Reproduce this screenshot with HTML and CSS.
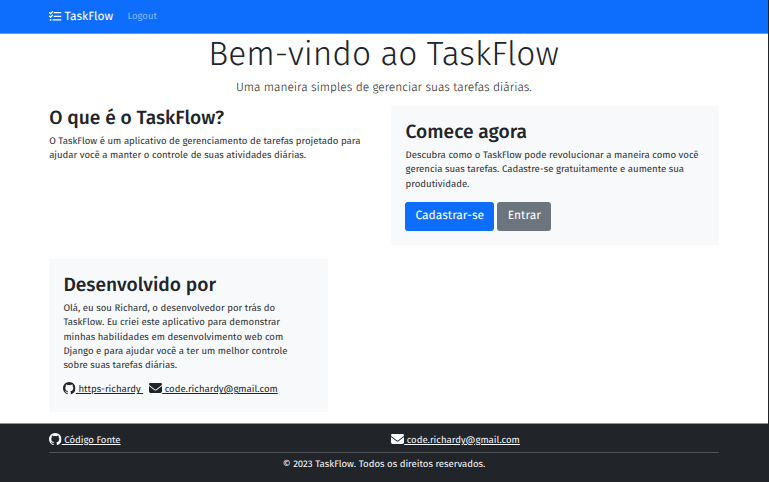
FILE: index.html
```html
<!DOCTYPE html>
<html lang="pt-br">
<head>
<meta charset="utf-8">
<title>TaskFlow</title>
<link rel="stylesheet" href="styles.css">
</head>
<body>
<svg class="sprite" aria-hidden="true">
  <symbol id="github" viewBox="0 0 16 16"><path d="M8 0C3.58 0 0 3.58 0 8c0 3.54 2.29 6.53 5.47 7.59.4.07.55-.17.55-.38 0-.19-.01-.82-.01-1.49-2.01.37-2.53-.49-2.69-.94-.09-.23-.48-.94-.82-1.13-.28-.15-.68-.52-.01-.53.63-.01 1.08.58 1.23.82.72 1.21 1.87.87 2.33.66.07-.52.28-.87.51-1.07-1.78-.2-3.64-.89-3.64-3.95 0-.87.31-1.59.82-2.15-.08-.2-.36-1.02.08-2.12 0 0 .67-.21 2.2.82.64-.18 1.32-.27 2-.27s1.36.09 2 .27c1.53-1.04 2.2-.82 2.2-.82.44 1.1.16 1.92.08 2.12.51.56.82 1.27.82 2.15 0 3.07-1.87 3.75-3.65 3.95.29.25.54.73.54 1.48 0 1.07-.01 1.93-.01 2.2 0 .21.15.46.55.38A8.01 8.01 0 0 0 16 8c0-4.42-3.58-8-8-8z"/></symbol>
  <symbol id="mail" viewBox="0 64 512 384" preserveAspectRatio="none"><path d="M48 64C21.500 64 0 85.500 0 112c0 15.100 7.100 29.300 19.200 38.400L236.800 313.600c11.400 8.500 27 8.500 38.400 0L492.800 150.400c12.100-9.100 19.200-23.300 19.200-38.400 0-26.500-21.500-48-48-48H48zM0 176v208c0 35.300 28.700 64 64 64h384c35.300 0 64-28.700 64-64V176L294.400 339.200c-22.800 17.100-54 17.100-76.800 0L0 176z"/></symbol>
  <symbol id="tasks" viewBox="0 0 12 10"><path d="M.5 1.600l1 1L3.400.5M.5 5l1 1L3.400 3.900M5 1.600h6.500M5 5h6.500M4 8.500h7.500" fill="none" stroke="currentColor" stroke-width="1.200" stroke-linecap="round" stroke-linejoin="round"/><circle cx="1.500" cy="8.500" r=".9"/></symbol>
</svg>
<nav class="navbar">
  <a class="brand"><svg class="tasks"><use href="#tasks"/></svg><span>TaskFlow</span></a>
  <a class="logout">Logout</a>
</nav>
<main>
  <header class="hero">
    <h1>Bem-vindo ao TaskFlow</h1>
    <p>Uma maneira simples de gerenciar suas tarefas diárias.</p>
  </header>
  <div class="row">
    <section class="about">
      <h2>O que é o TaskFlow?</h2>
      <p class="text">O TaskFlow é um aplicativo de gerenciamento de tarefas projetado para<br>ajudar você a manter o controle de suas atividades diárias.</p>
    </section>
    <section class="card start">
      <h2>Comece agora</h2>
      <p class="text">Descubra como o TaskFlow pode revolucionar a maneira como você<br>gerencia suas tarefas. Cadastre-se gratuitamente e aumente sua<br>produtividade.</p>
      <div class="buttons"><a class="btn primary">Cadastrar-se</a><a class="btn secondary">Entrar</a></div>
    </section>
  </div>
  <section class="card dev">
    <h2>Desenvolvido por</h2>
    <p class="text">Olá, eu sou Richard, o desenvolvedor por trás do<br>TaskFlow. Eu criei este aplicativo para demonstrar<br>minhas habilidades em desenvolvimento web com<br>Django e para ajudar você a ter um melhor controle<br>sobre suas tarefas diárias.</p>
    <div class="links">
      <a class="link"><svg><use href="#github"/></svg><span>&nbsp;https-richardy&nbsp;</span></a>
      <a class="link"><svg class="mail"><use href="#mail"/></svg><span>&nbsp;code.richardy@gmail.com</span></a>
    </div>
  </section>
</main>
<footer>
  <div class="foot-links">
    <a class="link"><svg><use href="#github"/></svg><span>&nbsp;Código Fonte</span></a>
    <a class="link"><svg class="mail"><use href="#mail"/></svg><span>&nbsp;code.richardy@gmail.com</span></a>
  </div>
  <p class="copy">© 2023 TaskFlow. Todos os direitos reservados.</p>
</footer>
</body>
</html>
```
FILE: styles.css
```css
* { box-sizing: border-box; }
body {
  margin: 0;
  width: 769px;
  height: 482px;
  overflow: hidden;
  display: flex;
  flex-direction: column;
  border-right: 1px solid #212529;
  background: #fff;
  color: #212529;
  font: 9.600px/14.270px "Fira Sans", "Noto Sans", sans-serif;
  text-rendering: geometricPrecision;
  white-space: nowrap;
}
h1, h2, p { margin: 0; }
.sprite { position: absolute; width: 0; height: 0; }
svg { fill: currentColor; flex: none; }
.navbar {
  height: 34px;
  padding: 0 49px 0 49.400px;
  display: flex;
  align-items: center;
  background: #0d6efd;
  border-bottom: 1px solid #5c9dfe;
  color: #fff;
}
.brand { display: flex; align-items: center; font-size: 12px; line-height: 15px; width: 78px; gap: 2.500px; }
.brand span { padding-top: 1px; }
.tasks { width: 12.500px; height: 10.500px; margin-top: -1px; }
.logout { color: #86b7fe; margin-top: -1px; }
main { flex: 1; padding: 0 49px 0 49.200px; }
.hero { height: 72px; text-align: center; }
.hero h1 { font-weight: 300; font-size: 33.500px; line-height: 40px; margin-left: -1px; }
.hero p { font-weight: 300; font-size: 12px; line-height: 18px; margin-top: 5px; margin-left: -.5px; }
.row { display: flex; justify-content: space-between; height: 153px; }
h2 { font-weight: 500; font-size: 19.200px; line-height: 23px; padding-top: 1px; margin-bottom: 4px; }
.text { color: #2e3236; }
.card { background: #f8f9fb; padding: 14px 14px 14px 14.200px; }
.start { width: 328px; height: 139px; padding-left: 14.600px; }
.dev { width: 279px; height: 153px; }
.buttons { display: flex; gap: 3px; margin: 11.500px 0 0 -.3px; }
.btn { height: 28.500px; line-height: 29px; border-radius: 3px; color: #fff; font-size: 12px; text-align: center; }
.primary { width: 89px; background: #0d6efd; }
.secondary { width: 54px; background: #6c757d; }
.links { display: flex; gap: 6px; margin-top: 10px; }
.link { display: flex; align-items: center; }
.link svg { width: 12.500px; height: 12.500px; margin-top: -2px; }
.link svg.mail { width: 13px; height: 10px; margin-top: -3px; }
.link span { text-decoration: underline; }
footer { height: 59px; padding: 9px 49px 0 49.200px; background: #212529; border-top: 1px solid #909294; color: #f8f9fa; }
.foot-links { display: grid; grid-template-columns: 342px 1fr; height: 20px; align-items: start; border-bottom: 1px solid #4d5154; }
.copy { text-align: center; padding-top: 4px; }
```
